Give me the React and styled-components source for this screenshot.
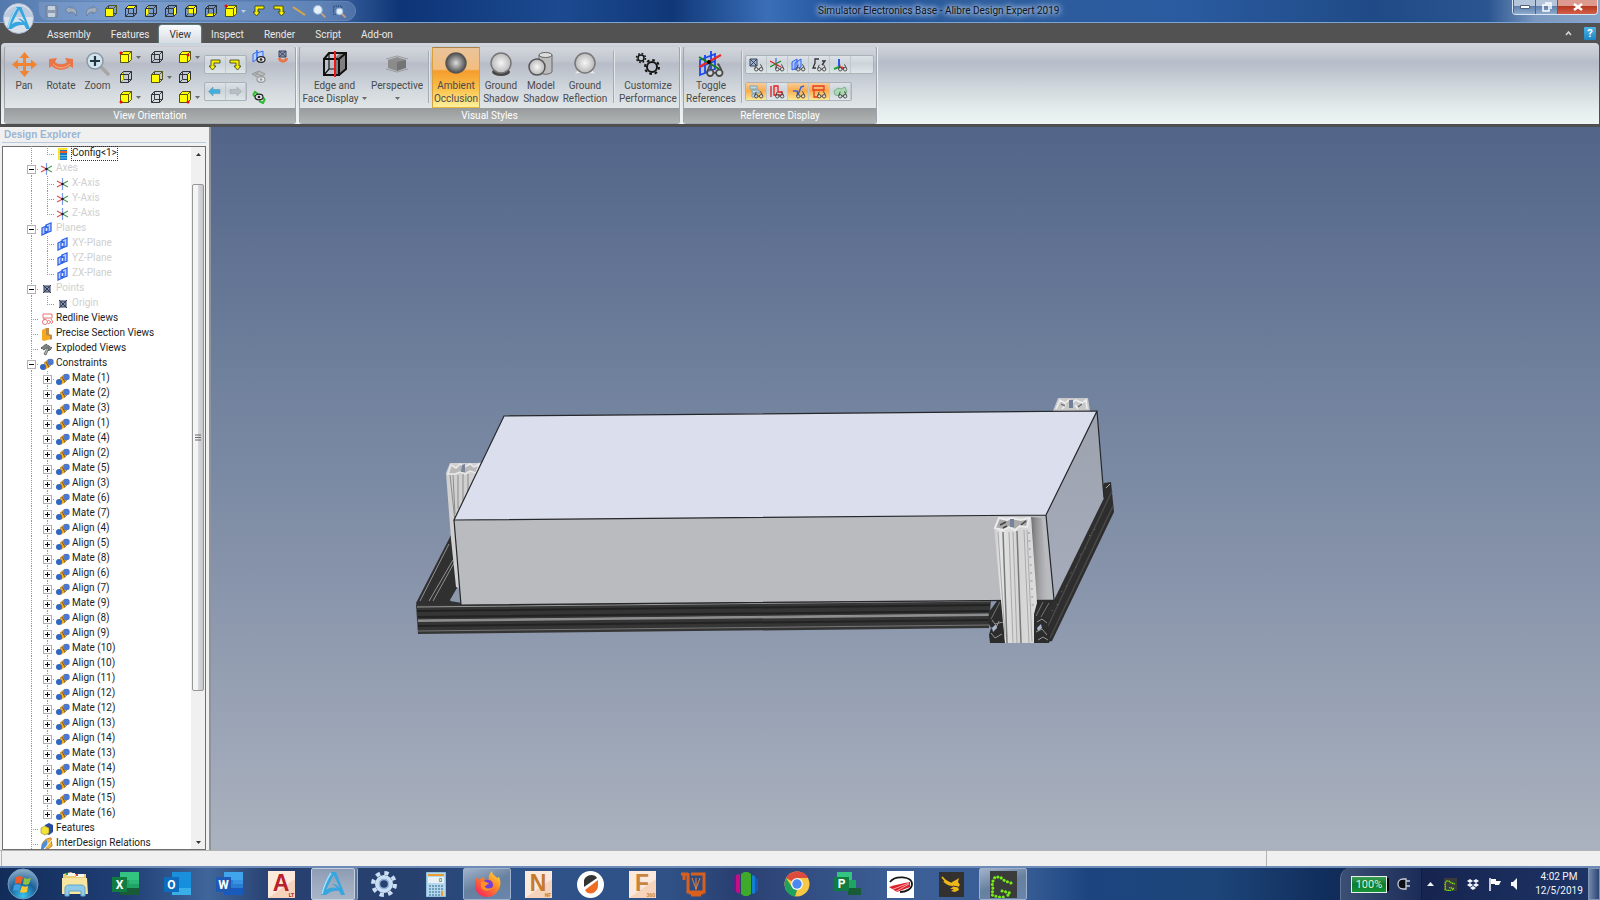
import React from "react";
import styled, { createGlobalStyle, css } from "styled-components";

const GlobalStyle = createGlobalStyle`
  * {
    box-sizing: border-box;
  }
  body {
    margin: 0;
    font-family: Roboto, "Noto Sans", sans-serif;
    font-size: 10px;
    color: #4a4a4a;
  }
  button {
    font: inherit;
    color: inherit;
    border: 0;
    padding: 0;
    background: none;
  }
  svg {
    display: block;
    flex: none;
  }
`;

const Window = styled.div`
  display: flex;
  flex-direction: column;
  height: 100vh;
  overflow: hidden;
  background: #4f4f4f;
`;

/* title bar */

const TitleBar = styled.header`
  display: flex;
  align-items: center;
  height: 23px;
  flex: none;
  border-bottom: 1px solid #7fa3d2;
  background: linear-gradient(
    90deg,
    #5479ae 0,
    #7198cb 8%,
    #466ca6 20%,
    #0d3577 25%,
    #1c4a90 35%,
    #103878 42%,
    #3a6fb8 48%,
    #1d4f98 53%,
    #2f5d9c 60%,
    #2a5ba0 74%,
    #1f4a86 86%,
    #2b5591 93%,
    #7b98bf 96%,
    #88a5c8 100%
  );
`;

const QuickBar = styled.div`
  display: flex;
  align-items: center;
  gap: 6px;
  height: 20px;
  width: 318px;
  margin-left: 38px;
  padding-left: 5px;
  border: 1px solid #6484b3;
  border-radius: 0 10px 10px 10px;
  background: rgba(150, 178, 218, 0.32);
`;

const QuickButton = styled.button`
  display: flex;
  align-items: center;
  justify-content: center;
  gap: 3px;
  min-width: 14px;
  height: 16px;
`;

const Title = styled.h1`
  flex: 1;
  margin: 0;
  padding-left: 462px;
  font-size: 10px;
  line-height: 22px;
  font-weight: 400;
  color: #0d1520;
  text-shadow: 0 0 4px #c3d4ee, 0 0 6px #c3d4ee, 0 0 8px #a9c2e6;
  white-space: nowrap;
`;

const WindowButtons = styled.div`
  display: flex;
  align-self: flex-start;
  height: 15px;
  margin-right: 2px;
  border: 1px solid #dbe6f5;
  border-top: 0;
  border-radius: 0 0 4px 4px;
  overflow: hidden;
`;

const WindowButton = styled.button`
  display: flex;
  align-items: center;
  justify-content: center;
  width: ${(p) => (p.$close ? 40 : 22)}px;
  border-left: 1px solid #48648c;
  background: ${(p) =>
    p.$close
      ? "linear-gradient(#dc9a8e 0 40%, #b53720 45%, #d4614a)"
      : "linear-gradient(#b3c4db 0 40%, #5e80ac 45%, #8fabcd)"};
`;

/* ribbon */

const TabRow = styled.nav`
  position: relative;
  display: flex;
  align-items: flex-end;
  height: 20px;
  flex: none;
  padding: 0 4px 0 37px;
  background: #525252;
`;

const AppButton = styled.button`
  position: absolute;
  left: 3px;
  top: -20px;
`;

const Tab = styled.button`
  height: 18px;
  padding: 0 10px;
  line-height: 20px;
  border-radius: 3px 3px 0 0;
  font-size: 10px;
  color: #e8e8e8;
  ${(p) =>
    p.$active &&
    css`
      color: #333;
      background: linear-gradient(#fafcfc, #d7dce4);
      box-shadow: 0 0 2px #8fdcea;
    `}
`;

const TabEnd = styled.div`
  display: flex;
  align-items: center;
  gap: 12px;
  height: 20px;
  margin-left: auto;
`;

const Help = styled.button`
  width: 12px;
  height: 13px;
  border-radius: 1px;
  font-size: 11px;
  line-height: 13px;
  font-weight: 700;
  color: #fff;
  background: linear-gradient(#4bb4e4, #1c86c6);
`;

const Ribbon = styled.div`
  display: flex;
  align-items: flex-start;
  gap: 3px;
  height: 81px;
  flex: none;
  margin: 0 1px;
  padding: 3px 3px 0;
  border-radius: 4px 4px 0 0;
  background: linear-gradient(#d3d6dd 0, #c3c8d2 14%, #b6bcc9 24%, #ccd2d8 50%, #e4ecec 82%, #eef5f4 100%);
`;

const Panel = styled.section`
  display: flex;
  flex-direction: column;
  height: 78px;
  border: 1px solid #9fa5ab;
  border-top-color: #c9ccd2;
  border-radius: 3px;
  overflow: hidden;
  box-shadow: 1px 0 0 #eef2f3;
  background: linear-gradient(#d3d7dc 0, #c1c6cf 18%, #b7bcc8 22%, #cdd3d9 50%, #e1e7e7 80%);
`;

const PanelBody = styled.div`
  display: flex;
  flex: 1;
`;

const PanelTitle = styled.h2`
  margin: 0;
  height: 15px;
  line-height: 15px;
  font-size: 10px;
  font-weight: 400;
  text-align: center;
  color: #fff;
  background: linear-gradient(#989b9b, #b1b4b4);
`;

const Tool = styled.button`
  display: flex;
  flex-direction: column;
  align-items: center;
  width: ${(p) => p.$w}px;
  height: 61px;
  padding-top: 4px;
  font-size: 10px;
  line-height: 13px;
  white-space: nowrap;
  border: 1px solid transparent;
  ${(p) =>
    p.$active &&
    css`
      border-color: #a8814c #d6a13c #e6b443;
      background: linear-gradient(#eac49c 0, #f3bd7e 36%, #f59c2c 39%, #fbc24c 70%, #fdf19b 100%);
    `}
`;

const ToolIcon = styled.span`
  display: flex;
  align-items: center;
  justify-content: center;
  height: 24px;
  margin-bottom: 3px;
`;

const CaretSpot = styled.span`
  padding-top: 5px;
`;

const Divider = styled.span`
  width: 1px;
  height: 52px;
  margin: 4px 3px;
  background: #a5abb3;
  box-shadow: 1px 0 0 #e2e6e9;
`;

const CubeGrid = styled.div`
  display: grid;
  grid-template-columns: 31px 28px 26px;
  grid-template-rows: repeat(3, 20px);
  margin-left: 3px;
`;

const CubeButton = styled.button`
  display: flex;
  align-items: center;
  gap: 3px;
`;

const Stack = styled.div`
  display: flex;
  flex-direction: column;
  gap: 8px;
  padding: 8px 0 0;
`;

const Group = styled.div`
  display: flex;
  align-self: flex-start;
  height: 19px;
  width: ${(p) => p.$w}px;
  margin-right: ${(p) => p.$gap || 0}px;
  border: 1px solid #abb2ba;
  border-radius: 2px;
  background: linear-gradient(#dce2e6, #cdd4da 45%, #dfe6e8);
`;

const GroupButton = styled.button`
  display: flex;
  align-items: center;
  justify-content: center;
  width: 21px;
  border-right: 1px solid #c0c7cd;
  ${(p) =>
    p.$active &&
    css`
      background: linear-gradient(#f6cd9a, #f9ab4e 45%, #fde793);
    `}
`;

const EyeGrid = styled.div`
  display: grid;
  grid-template-columns: 24px 24px;
  grid-template-rows: repeat(3, 20px);
  place-items: center;
`;

/* middle part */

const Main = styled.main`
  display: flex;
  flex: 1;
  min-height: 0;
  margin-top: 3px;
  background: #f0f0f0;
`;

const Sidebar = styled.aside`
  display: flex;
  flex-direction: column;
  width: 211px;
  flex: none;
  padding: 0 3px 0 2px;
  border-right: 2px solid #8e939c;
`;

const SidebarTitle = styled.h2`
  height: 16px;
  margin: 0 0 3px;
  padding-left: 2px;
  border-bottom: 1px solid #b8cbe0;
  font-family: "Liberation Sans", Arial, sans-serif;
  font-size: 10px;
  line-height: 16px;
  color: #9bb5d3;
`;

const TreeBox = styled.div`
  display: flex;
  flex: 1;
  min-height: 0;
  border: 1px solid #6d6f73;
  background: #fff;
`;

const Tree = styled.ul`
  flex: 1;
  margin: -1px 0 0;
  padding: 0 0 0 20px;
  list-style: none;
  overflow: hidden;
  font-size: 10px;
  color: #1c1c1c;
`;

const TreeRow = styled.li`
  display: flex;
  align-items: center;
  height: 15px;
`;

const Label = styled.span`
  height: 15px;
  line-height: 14px;
  padding: 0 1px;
  white-space: nowrap;
  color: ${(p) => (p.$dim ? "#cfcfcf" : "inherit")};
  outline: ${(p) => (p.$focus ? "1px dotted #333" : "none")};
  outline-offset: -1px;
`;

const dots = (dir) => `repeating-linear-gradient(${dir}, #999 0 1px, transparent 1px 2px)`;

const Guide = styled.span`
  display: flex;
  align-items: center;
  justify-content: center;
  width: 16px;
  height: 15px;
  background-repeat: no-repeat;
  background-image: ${(p) => (p.$branch ? `${dots("180deg")}, ${dots("90deg")}` : dots("180deg"))};
  background-size: 1px ${(p) => (p.$last ? "8px" : "15px")}, 8px 1px;
  background-position: 8px 0, 8px 8px;
`;

const Toggle = styled.button`
  width: 9px;
  height: 9px;
  margin: 2px 0 0 1px;
  border: 1px solid #b0b0b0;
  background: linear-gradient(#111, #111) 1px 3px / 5px 1px no-repeat,
    ${(p) => (p.$open ? "" : "linear-gradient(#111, #111) 3px 1px / 1px 5px no-repeat,")}
    linear-gradient(#fff, #fff);
`;

const ScrollBar = styled.div`
  display: flex;
  flex-direction: column;
  align-items: center;
  width: 14px;
  background: #f0f0f0;
`;

const ScrollArrow = styled.button`
  display: flex;
  align-items: center;
  justify-content: center;
  width: 14px;
  height: 14px;
`;

const Thumb = styled.div`
  display: flex;
  align-items: center;
  justify-content: center;
  width: 12px;
  height: 507px;
  margin: 23px 0 auto;
  border: 1px solid #979797;
  border-radius: 2px;
  background: linear-gradient(90deg, #f5f5f5 0 45%, #d9dadc 50%, #c4c5c9);
`;

const Viewport = styled.div`
  flex: 1;
  min-width: 0;
  background: linear-gradient(#526488 0, #71829e 36%, #8592a9 60%, #abb2bf 100%);

  svg {
    width: 100%;
    height: 100%;
  }
`;

const StatusBar = styled.footer`
  display: flex;
  height: 16px;
  flex: none;
  padding-left: 1px;
  border-top: 1px solid #b4b4b4;
  background: #f0f0f0;
`;

const StatusCell = styled.div`
  flex: ${(p) => p.$grow};
  border-left: 1px solid #b4b4b4;
`;

/* taskbar */

const TaskBar = styled.footer`
  display: flex;
  height: 34px;
  flex: none;
  border-top: 2px solid #6d8bb6;
  background: linear-gradient(
    90deg,
    #122c5a 0,
    #203f75 8%,
    #3f669b 13%,
    #27406f 17%,
    #27416f 26%,
    #2e538a 32%,
    #2f5186 42%,
    #2a3f71 46%,
    #3c5f96 56%,
    #385d95 64%,
    #1c4580 68%,
    #1d4579 76%,
    #102d5b 83%,
    #16244f 89%,
    #1d3567 100%
  );
`;

const StartButton = styled.button`
  display: flex;
  align-items: center;
  justify-content: center;
  width: 45px;
`;

const TaskList = styled.div`
  display: grid;
  grid-template-columns: repeat(19, 1fr);
  justify-items: center;
  width: 980px;
  margin-left: 4px;
`;

const Task = styled.button`
  display: flex;
  align-items: center;
  justify-content: center;
  width: 48px;
  height: 32px;
  border-radius: 2px;
  ${(p) =>
    p.$active &&
    css`
      border: 1px solid #9db1cc;
      background: linear-gradient(160deg, #a2b2ca 0, #66809f 50%, #6a86ad 100%);
    `}
  ${(p) =>
    p.$front &&
    css`
      width: 44px;
      border-color: #c5d0de;
      background: linear-gradient(#8e9bb5, #9dabbf 50%, #a9b4c6);
      box-shadow: 2px 0 0 #5f7698, 3px 0 0 #a2b0c4;
    `}
`;

const Tray = styled.div`
  display: flex;
  align-items: center;
  margin-left: auto;
`;

const PowerBox = styled.div`
  display: flex;
  align-items: center;
  gap: 10px;
  align-self: stretch;
  width: 82px;
  padding-left: 10px;
  border-left: 1px solid #5e7293;
  border-top-left-radius: 10px;
  border-right: 1px solid #101d45;
  background: linear-gradient(90deg, #3b4f74, #1b2c58);
`;

const Battery = styled.span`
  width: 36px;
  height: 17px;
  border: 1px solid #e5efe7;
  font-size: 11px;
  line-height: 15px;
  text-align: center;
  color: #d9f2dc;
  background: linear-gradient(#3a9d54, #0f7a2c 50%, #169539);
  box-shadow: 4px 0 0 -2px #000;
`;

const TrayIcons = styled.div`
  display: flex;
  align-items: center;
  gap: 10px;
  width: 112px;
  padding-left: 5px;
`;

const Clock = styled.time`
  width: 50px;
  margin-right: 4px;
  font-size: 10px;
  line-height: 14px;
  text-align: center;
  color: #f2f5fa;
  white-space: nowrap;
`;

const ShowDesktop = styled.button`
  align-self: stretch;
  width: 12px;
  border: 1px solid #8194b4;
  background: linear-gradient(90deg, #7288ae, #2b4474);
`;

/* small drawings */

const Caret = ({ color = "#6b6b6b" }) => (
  <svg width="5" height="3" viewBox="0 0 5 3">
    <path d="M0 0h5L2.500 3z" fill={color} />
  </svg>
);

const CUBE_FACES = {
  front: "M1.500 4.500h8v8h-8z",
  back: "M4.500 1.500h8v8h-8z",
  top: "M1.500 4.500l3-3h8l-3 3z",
  bottom: "M1.500 12.500l3-3h8l-3 3z",
  left: "M1.500 4.500l3-3v8l-3 3z",
  right: "M9.500 4.500l3-3v8l-3 3z",
};

const Cube = ({ face, dot }) => (
  <svg width="14" height="14" viewBox="0 0 14 14" fill="none">
    <path d="M4.500 1.500v8h8M1.500 12.500l3-3" stroke="#3c4048" strokeWidth="1" />
    {face === "solid" ? (
      <path d="M1.500 4.500l3-3h8v8l-3 3h-8z" fill="#ff0" />
    ) : (
      face && <path d={CUBE_FACES[face]} fill="#ff0" />
    )}
    <path
      d="M1.500 4.500h8v8h-8zM1.500 4.500l3-3h8l-3 3M12.500 1.500v8l-3 3"
      stroke={face === "front" || face === "solid" ? "#55551a" : "#2e323a"}
      strokeWidth="1"
    />
    {dot && <circle cx={dot[0]} cy={dot[1]} r="1.500" fill="#f00" />}
  </svg>
);

const Turn = ({ flip }) => (
  <svg width="12" height="12" viewBox="0 0 12 12">
    <path
      d={flip ? "M1 1h9v6h2L8.500 11 5 7h2V4H1z" : "M11 1H2v6H0l3.500 4L7 7H5V4h6z"}
      fill="#f4ee00"
      stroke="#3a3a12"
      strokeWidth=".8"
    />
  </svg>
);

const Arrow = ({ right }) => (
  <svg width="13" height="11" viewBox="0 0 13 11">
    <path
      d={right ? "M12.500 5.500L8 1v2.500H1v4h7V10z" : "M.5 5.500L5 1v2.500h7v4H5V10z"}
      fill={right ? "#b9bec3" : "#3fb0dd"}
      stroke={right ? "#a4a9ae" : "#6f98b0"}
      strokeWidth=".6"
    />
  </svg>
);

const Lens = ({ size, plus, box }) => (
  <svg width={size} height={size} viewBox="0 0 24 24">
    {box && <path d="M1 2h15v15H1z" fill="none" stroke="#24446f" strokeWidth="2" strokeDasharray="2 2" />}
    <path d="M15 15l7 7" stroke={plus ? "#a9a6a6" : "#c9a078"} strokeWidth="3.500" strokeLinecap="round" />
    <circle
      cx={box ? 12 : 9}
      cy={box ? 12 : 9}
      r={box ? 6 : 8}
      fill={plus ? "#cfe4ee" : "#e4f1fb"}
      stroke={plus ? "#8b979f" : "#9db6cf"}
      strokeWidth={plus ? 1.5 : 2}
    />
    {plus && <path d="M9 4v10M4 9h10" stroke="#253540" strokeWidth="2.200" />}
  </svg>
);

const Pan = () => (
  <svg width="25" height="25" viewBox="0 0 25 25">
    <path
      d="M12.500 0l5 6H14v5h5V7.500l6 5-6 5V14h-5v5h3.500l-5 6-5-6H11v-5H6v3.500l-6-5 6-5V11h5V6H7.500z"
      fill="#f08433"
    />
  </svg>
);

const Rotate = () => (
  <svg width="24" height="24" viewBox="0 0 24 24">
    <path d="M0 7l8-1-2 4c3 3 9 3 12 0l-2-4 8 1v9l-3-2c-4 5-14 5-18 0l-3 2z" fill="#ea7547" />
    <path d="M4 12c4 5 12 5 17 0" fill="none" stroke="#f6b08e" strokeWidth="1" />
  </svg>
);

const EdgeCube = () => (
  <svg width="26" height="26" viewBox="0 0 26 26">
    <path d="M13 7l5-5h6v16l-7 6h-4z" fill="#808080" />
    <path d="M7 2v16h6M2 24l5-6" fill="none" stroke="#111" strokeWidth="1.200" />
    <path d="M2 8h15v16H2zM2 8l5-6h17v16l-7 6M17 8l7-6" fill="none" stroke="#111" strokeWidth="2" />
    <path d="M13 0v26" stroke="#f01616" strokeWidth="2" />
  </svg>
);

const PerspectiveIcon = () => (
  <svg width="24" height="20" viewBox="0 0 24 20">
    <path d="M1 5l11-3 11 3M1 15l11 3 11-3" fill="none" stroke="#9c9c9c" strokeWidth="1" />
    <path d="M3 6l9-2v13l-9-3z" fill="#8b8b8b" />
    <path d="M12 4l9 2v8l-9 3z" fill="#747474" />
    <path d="M3 6l9-3 9 3-9 2z" fill="#8f8f8f" />
  </svg>
);

const Ball = ({ kind }) => (
  <svg width="26" height="24" viewBox="0 0 26 24">
    <defs>
      <radialGradient id={`ball-${kind}`}>
        <stop offset="0" stopColor={kind === "ao" ? "#ddd" : "#f6f6f6"} />
        <stop offset="1" stopColor={kind === "ao" ? "#4d4d4d" : "#b9b9b9"} />
      </radialGradient>
    </defs>
    {kind === "ground" && <ellipse cx="13" cy="20" rx="9" ry="4" fill="#474747" />}
    {kind === "mirror" && <path d="M3 22l3-4h14l3 4c-4-2-16-2-20 0z" fill="#eceeee" />}
    {kind === "model" ? (
      <>
        <path d="M11 3v17c3 3 10 3 13 0V3z" fill="#bcbcbc" stroke="#666" />
        <ellipse cx="17.500" cy="3" rx="6.500" ry="2.500" fill="#ddd" stroke="#666" />
        <circle cx="9" cy="15" r="8" fill="url(#ball-model)" stroke="#555" strokeWidth="1.500" />
      </>
    ) : (
      <circle cx="13" cy="11" r="10" fill={`url(#ball-${kind})`} stroke={kind === "ao" ? "#555" : "#777"} strokeWidth="1.500" />
    )}
  </svg>
);

const Gear = ({ x, y, r, color = "#151515", width = 2 }) => (
  <g fill="none" stroke={color}>
    <circle cx={x} cy={y} r={r} strokeWidth={width} />
    <circle cx={x} cy={y} r={r + width} strokeWidth={width} strokeDasharray={`${((r + width) * Math.PI) / 8} ${((r + width) * Math.PI) / 8}`} />
  </g>
);

const Glasses = ({ x = 0, y = 0, s = 1 }) => (
  <g transform={`translate(${x} ${y}) scale(${s})`} fill="rgba(225,225,225,.6)" stroke="#4b4b4b" strokeWidth="1.300">
    <circle cx="3" cy="7" r="2.300" />
    <circle cx="9.500" cy="7" r="2.300" />
    <path d="M5.300 7h2M1 6l2-5M11 5L9 1h-1" fill="none" />
  </g>
);

const ToggleRefs = () => (
  <svg width="28" height="28" viewBox="0 0 28 28">
    <path d="M3 10l15-6v15L3 25zM8 5v18M14 1v19M3 17l15-6" fill="none" stroke="#1948f0" strokeWidth="1.800" />
    <path d="M2 17L24 5" stroke="#ee2525" strokeWidth="2" />
    <path d="M2 7l20 12" stroke="#13801e" strokeWidth="2" />
    <circle cx="12" cy="12" r="2" />
    <Glasses x={9} y={13} s={1.4} />
  </svg>
);

const REF_SHAPES = {
  point: <path d="M1 1h7v7H1zM1 1l7 7M8 1L1 8" fill="#9fb2cc" stroke="#39435d" />,
  axis: (
    <g fill="none" strokeWidth="1.200">
      <path d="M6 0v11" stroke="#3d6cf0" />
      <path d="M0 3l11 6" stroke="#d23" />
      <path d="M0 9l11-6" stroke="#282" />
    </g>
  ),
  plane: <path d="M1 4l5-3v9l-5 2zM4 5l6-4v8l-6 3z" fill="#a9c4ff" stroke="#2f61e8" />,
  sketch: <path d="M7 1H3v4l-2 5h3M10 3h3l-3 4" fill="none" stroke="#333" strokeWidth="1.300" />,
  csys: (
    <g fill="none" strokeWidth="2">
      <path d="M6 9V1" stroke="#2d55e8" />
      <path d="M6 9l-5 2" stroke="#1da53a" />
      <path d="M6 9l5 1" stroke="#e42727" />
    </g>
  ),
  layers: <path d="M1 1h7v3H1zM3 5h7v3H3zM3 9h5v3H3z" fill="#c3d9e2" stroke="#7da3b5" />,
  dims: <path d="M1 1v11M4 1h4v6h4v3H4z" fill="#f3c7c7" stroke="#e02020" strokeWidth="1.300" />,
  surface: <path d="M2 6h4l1 4 3-8 3-1" fill="none" stroke="#3565d8" strokeWidth="1.500" />,
  redline: <path d="M1 1h11v4H1zM2 5v7h4" fill="none" stroke="#e83a1e" strokeWidth="1.300" />,
  mesh: <path d="M1 6l4-3 3 1 4-2 2 5-5 4-7-1z" fill="#a9d8b2" stroke="#7fb28b" />,
};

const RefIcon = ({ kind }) => (
  <svg width="15" height="14" viewBox="0 0 15 14">
    {REF_SHAPES[kind]}
    <Glasses x={5} y={6} s={0.75} />
  </svg>
);

const EyeIcon = ({ kind }) => (
  <svg width="14" height="14" viewBox="0 0 14 14">
    {kind === "plane" && <path d="M1 4l4-2V0v9l-4 3zM5 3l6-2v8l-6 1z" fill="#b8d0ff" stroke="#2f6bf0" />}
    {kind === "grid" && <path d="M0 4l7-3 6 3-6 4zM3 3l7 3M7 1L3 6" fill="#bbb" stroke="#999" />}
    {kind === "refresh" && <path d="M1 5l2-3 3 2M13 9l-2 4-4-2M1 5l3 2M13 9l-3-1" fill="none" stroke="#2bbd31" strokeWidth="2" />}
    <ellipse
      cx={kind === "refresh" ? 7 : 9}
      cy={kind === "refresh" ? 7 : 9.5}
      rx="4"
      ry="2.800"
      fill="#dfe3e6"
      stroke={kind === "grid" ? "#999" : "#222"}
      strokeWidth="1.200"
    />
    <circle cx={kind === "refresh" ? 7 : 9} cy={kind === "refresh" ? 7 : 9.5} r="1.300" fill={kind === "grid" ? "#999" : "#222"} />
  </svg>
);

const AlibreMark = ({ size }) => (
  <svg width={size} height={size} viewBox="0 0 28 28">
    <path d="M12 2h5l9 23h-4c-2-5-5-9-9-11 4 0 6 2 8 4L14.500 5 7 20c5-4 11-3 15 1-6-1-11 0-15 4H2C4 15 8 7 12 2z" fill="#37a6df" />
    <path d="M12 3C8 9 5 16 3 24" fill="none" stroke="#a9dcf5" strokeWidth="1.500" />
  </svg>
);

/* tree icons */

const TreeIcon = ({ kind }) => (
  <svg width="16" height="14" viewBox="0 0 16 14">
    {kind === "config" && (
      <>
        <path d="M3 1h9v12H3z" fill="#fbe52c" />
        <path d="M5 3h7v10H5z" fill="#1878c8" />
        <path d="M5 4h7v2H5z" fill="#f45b22" />
        <path d="M5 8.500h7M5 11h7" stroke="#5fc0e8" />
      </>
    )}
    {kind === "axis" && (
      <g strokeWidth="1.200">
        <path d="M7.500 1v12" stroke="#8199ec" />
        <path d="M2 4l5.500 3L2 10" fill="none" stroke="#e05252" />
        <path d="M13 4L7.500 7l5.500 3" fill="none" stroke="#4fa05a" />
        <circle cx="7.500" cy="7" r="1.300" fill="#222" />
      </g>
    )}
    {kind === "plane" && (
      <g fill="#bcd0ff" stroke="#2f62ea" strokeWidth="1.300">
        <path d="M7 3l5-2v8l-5 2z" />
        <path d="M3 6l4-2v7l-4 2z" />
        <path d="M6 6l3-1v4l-3 1z" fill="#e4ecff" />
      </g>
    )}
    {kind === "point" && <path d="M5 4h6v6H5zM4 3l8 8M12 3l-8 8" fill="#7e92c0" stroke="#33384c" />}
    {kind === "redline" && (
      <g fill="none" stroke="#e87474">
        <path d="M4 2h9v4H4z" />
        <circle cx="6" cy="10" r="2.500" />
        <path d="M9 8l3 2-3 2M5 6v2M12 7l2 3-2 2" />
      </g>
    )}
    {kind === "section" && (
      <>
        <path d="M3 3l4-2v7l5 0v4l-7 2-2-1z" fill="#f6a81f" />
        <path d="M7 1l3 0v6l3 1v4l-2 1V9L7 8z" fill="#bb8a4a" />
      </>
    )}
    {kind === "exploded" && (
      <>
        <path d="M2 6l5-4 6 4-3 3-3-3-2 2z" fill="#7d8484" stroke="#4a5050" strokeDasharray="2 1" />
        <path d="M10 6l-3 7-2-1 3-6z" fill="#b5bbbb" stroke="#555c5c" strokeWidth=".8" />
      </>
    )}
    {kind === "constraint" && (
      <>
        <path d="M5 6l5-4 4 4-5 5z" fill="#f2a61f" stroke="#9a6b1e" strokeWidth=".6" />
        <circle cx="11.500" cy="5" r="3.200" fill="#4c78cf" />
        <path d="M3 8l4-2 3 4-4 3z" fill="#f2a61f" />
        <circle cx="4" cy="10" r="3" fill="#2f68c4" />
        <path d="M7 5l3 5" stroke="#7a5a2a" />
      </>
    )}
    {kind === "features" && (
      <>
        <path d="M6 3l4-2 4 2v7l-4 3-4-2z" fill="#2b4ba0" />
        <path d="M2 6l4-2 4 2v5l-4 2-4-2z" fill="#f2e436" stroke="#8c841c" strokeWidth=".6" />
      </>
    )}
    {kind === "inter" && (
      <>
        <path d="M3 9c0-4 4-8 9-8l1 8-4 3z" fill="#f0b83a" stroke="#c97e2a" />
        <path d="M2 12c0-5 3-8 6-9v6l-3 4z" fill="#4c8fd6" />
        <path d="M5 12l8-9" stroke="#fff" />
      </>
    )}
  </svg>
);

const constraintNames = [
  "Mate (1)", "Mate (2)", "Mate (3)", "Align (1)", "Mate (4)", "Align (2)",
  "Mate (5)", "Align (3)", "Mate (6)", "Mate (7)", "Align (4)", "Align (5)",
  "Mate (8)", "Align (6)", "Align (7)", "Mate (9)", "Align (8)", "Align (9)",
  "Mate (10)", "Align (10)", "Align (11)", "Align (12)", "Mate (12)", "Align (13)",
  "Align (14)", "Mate (13)", "Mate (14)", "Align (15)", "Mate (15)", "Mate (16)",
];

const treeRows = [
  { text: "Config<1>", icon: "config", child: true, last: true, focus: true },
  { text: "Axes", icon: "axis", open: true, dim: true },
  { text: "X-Axis", icon: "axis", child: true, dim: true },
  { text: "Y-Axis", icon: "axis", child: true, dim: true },
  { text: "Z-Axis", icon: "axis", child: true, dim: true, last: true },
  { text: "Planes", icon: "plane", open: true, dim: true },
  { text: "XY-Plane", icon: "plane", child: true, dim: true },
  { text: "YZ-Plane", icon: "plane", child: true, dim: true },
  { text: "ZX-Plane", icon: "plane", child: true, dim: true, last: true },
  { text: "Points", icon: "point", open: true, dim: true },
  { text: "Origin", icon: "point", child: true, dim: true, last: true },
  { text: "Redline Views", icon: "redline" },
  { text: "Precise Section Views", icon: "section" },
  { text: "Exploded Views", icon: "exploded" },
  { text: "Constraints", icon: "constraint", open: true },
  ...constraintNames.map((text, i) => ({
    text,
    icon: "constraint",
    child: true,
    closed: true,
    last: i === constraintNames.length - 1,
  })),
  { text: "Features", icon: "features" },
  { text: "InterDesign Relations", icon: "inter" },
];

const TreeItem = ({ item }) => {
  const toggle = (item.open || item.closed) && (
    <Toggle $open={item.open} aria-label={`Toggle ${item.text}`} />
  );
  return (
    <TreeRow>
      <Guide $branch={!item.child}>{!item.child && toggle}</Guide>
      {item.child && (
        <Guide $branch $last={item.last}>
          {toggle}
        </Guide>
      )}
      <TreeIcon kind={item.icon} />
      <Label $dim={item.dim} $focus={item.focus}>
        {item.text}
      </Label>
    </TreeRow>
  );
};

/* 3D model */

const Model = () => (
  <svg viewBox="211 127 1389 723" preserveAspectRatio="xMidYMid slice">
    <defs>
      <linearGradient id="post" x1="0" x2="1">
        <stop offset="0" stopColor="#c9c9c9" />
        <stop offset=".15" stopColor="#e3e3e3" />
        <stop offset=".6" stopColor="#d4d4d4" />
        <stop offset="1" stopColor="#dedede" />
      </linearGradient>
      <linearGradient id="shade" x1="0" x2="1">
        <stop offset="0" stopColor="#555" stopOpacity=".75" />
        <stop offset="1" stopColor="#999" stopOpacity="0" />
      </linearGradient>
      <linearGradient id="side" x1="0" x2="0" y1="0" y2="1">
        <stop offset="0" stopColor="#9da2ae" />
        <stop offset="1" stopColor="#a6acbb" />
      </linearGradient>
    </defs>

    {/* back rails and posts */}
    <path d="M451 535l-35 68 1 4h45v-4l-12-2 8-14z" fill="#303030" />
    <path d="M450 600h12l-1-14-4 2z" fill="#8d98aa" />
    <path d="M449 544l-29 57M453 560l-24 41M454 563l-21 38" stroke="#a9aab0" strokeWidth=".8" fill="none" />
    <path d="M446 473l4-10h32l-27 57 4 68-3-1-5-48z" fill="#d0d0d0" />
    <path d="M450 475l5 46M453 475l2 39M458 475v34M463 474v27M468 474v17" stroke="#8b8b8b" strokeWidth="1" />
    <path d="M448 474l3-9 5 3 4-4 5 3 5-3 4 3 5-3-3 9-6-2-5 3-5-2-5 2z" fill="#b9b9b9" stroke="#e9e9e9" strokeWidth="1.500" />
    <path d="M462 465l3-1v8h-4z" fill="#77849c" />
    <path d="M1053 411l5-13h30l2 13z" fill="#c9c9c9" />
    <path d="M1056 409l4-9 5 3 4-3 3 3 4-3 6 3 4-3 1 9M1062 409l4-4M1078 409l-3-4" fill="none" stroke="#eee" strokeWidth="1.500" />
    <path d="M1061 404l4 2M1082 404l-4 3" stroke="#666" strokeWidth="1.200" />
    <path d="M1069 400h4v8h-4z" fill="#70809a" />

    {/* right rail */}
    <path d="M1104 483l7-1 3 30-62 129-8 2-20-8 10-34 19-1z" fill="#2e2e2e" />
    <path d="M1112 491L1048 626M1113 506L1050 638" stroke="#484848" strokeWidth="1.500" />
    <path d="M1106 488l4-4" stroke="#aaa" />
    <path d="M1095 529l-40 80M1090 535l-38 76" stroke="#777" strokeDasharray="1 20" />

    {/* front rail */}
    <path d="M416 605l575-6-2 29-571 6z" fill="#353535" />
    <path d="M417 607l573-6M418 620l571-6" stroke="#9a9a9c" strokeWidth="1" />
    <path d="M417 611l573-6M418 617l571-6" stroke="#222" strokeWidth="2" />
    <path d="M418 621l571-6" stroke="#8d8e90" strokeWidth="2" />
    <path d="M418 626l571-6" stroke="#232323" strokeWidth="2" />
    <path d="M418 631l571-6" stroke="#777" strokeWidth="1" />

    {/* box */}
    <path d="M504 416l593-5-51 104-592 5z" fill="#dbdfed" />
    <path d="M454 520l592-5 8 85-593 5z" fill="#babbbf" />
    <path d="M1097 411l7 87-50 102-8-85z" fill="url(#side)" />
    <path d="M504 416l593-5-51 104-592 5zM454 520l7 85 593-5-8-85M1097 411l7 87" fill="none" stroke="#26272a" strokeWidth="1.200" />

    {/* rail ends */}
    <path d="M989 612l8-11h6l2 42h-15l-1-8 2-7-3-6z" fill="#2c2c2c" />
    <path d="M1034 600h19l-10 18 6 2-2 7 3 8-1 8h-15z" fill="#2c2c2c" />
    <path d="M992 620l3 4 8-2M991 628h5l3-7M991 633l4 5 7-4M1037 622l5-3 5 4M1036 632l6-3 5 6M1038 640l5-3 5 3" fill="none" stroke="#949494" strokeWidth="1" />
    <path d="M1000 602l-9 17M1043 602l-7 14M1049 603l-8 14" stroke="#777" strokeWidth="1" />
    <path d="M992 628l4-4 1 4-4 4zM1037 628l4-4 1 4-4 3z" fill="#a9b5cc" />

    {/* front post */}
    <path d="M1031 517l11 1 6 82h-13z" fill="url(#shade)" />
    <path d="M994 527l5-10h32l6 86-3 11v29h-29z" fill="url(#post)" />
    <path d="M1003 532l4 111M1017 531l4 112" stroke="#77797a" strokeWidth="1.500" />
    <path d="M998 532l7 105M1009 532l4 111M1013 532l4 111M1024 530l5 113M1027 530l5 112" stroke="#aaa" strokeWidth="1" />
    <path d="M1029 532l4 78" stroke="#b5b5b5" strokeWidth="2" strokeDasharray="2 6" />
    <path d="M995 528l4-10 8 2 4-2 10 2 8-2-2 9-7-1-5 4-6-3-6 3z" fill="#a9a9a9" stroke="#ececec" strokeWidth="2" />
    <path d="M1000 525l6-3M1026 521l-5 4M1003 528l4-2" stroke="#444" strokeWidth="1.500" />
    <path d="M1010 519h4v8h-4z" fill="#75839d" />
  </svg>
);

/* taskbar drawings */

const OfficeIcon = ({ letter, colors }) => (
  <svg width="28" height="26" viewBox="0 0 28 26">
    <path d="M8 1h19v8H8z" fill={colors[0]} />
    <path d="M8 9h19v8H8z" fill={colors[1]} />
    <path d="M8 17h19v7H8z" fill={colors[2]} />
    <path d="M17 1h10v12H17z" fill={colors[0]} opacity=".6" />
    <path d="M0 6h15v15H0z" fill={colors[3]} />
    <text x="7.500" y="18" fontSize="12" fontWeight="700" fill="#fff" textAnchor="middle">
      {letter}
    </text>
  </svg>
);

const LetterTile = ({ letter, sub, color }) => (
  <svg width="27" height="27" viewBox="0 0 27 27">
    <path d="M0 0h27v27H0z" fill="#fbe9dd" />
    <path d="M0 27L27 8v19z" fill="#f6d3bb" />
    <text x="13" y="20" fontSize="23" fontWeight="700" fill={color} textAnchor="middle" fontFamily="Liberation Sans">
      {letter}
    </text>
    <text x="26" y="26" fontSize="5" fontWeight="700" fill={color} textAnchor="end">
      {sub}
    </text>
  </svg>
);

const GDots = ({ size }) => (
  <svg width={size} height={size} viewBox="0 0 27 27">
    <path d="M0 0h27v27H0z" fill="#3a3b3b" />
    <path
      d="M21 12l-6-2-5-4-5 0-3 6 1 6-1 6 6 2 6 0M12 20l8 2-3 3"
      fill="none"
      stroke="#78ea18"
      strokeWidth="3"
      strokeLinecap="round"
      strokeDasharray=".1 3.600"
    />
  </svg>
);

const Explorer = () => (
  <svg width="28" height="26" viewBox="0 0 28 26">
    <path d="M2 3l8-2 3 2h12v20H2z" fill="#e8cd74" />
    <path d="M6 2h8v3H6zM15 3h8v3h-8z" fill="#f4f7f2" />
    <path d="M5 2h2v2H5z" fill="#29a043" />
    <path d="M15 3h2v2h-2z" fill="#d54531" />
    <path d="M1 7h25l1 16H1z" fill="#f8e5a0" />
    <path d="M4 25v-8c0-2 2-3 4-3h12c2 0 4 1 4 3v8h-4v-5H8v5z" fill="#8fcbe9" stroke="#5ea5cd" />
  </svg>
);

const GearTask = () => (
  <svg width="26" height="26" viewBox="0 0 26 26">
    <Gear x={13} y={13} r={7} color="#c9ddf3" width={4} />
    <circle cx="13" cy="13" r="4.500" fill="none" stroke="#8fb4e2" strokeWidth="1.500" />
  </svg>
);

const Calculator = () => (
  <svg width="20" height="25" viewBox="0 0 20 25">
    <path d="M0 0h20v25H0z" fill="#b7d9ee" stroke="#6fa5c8" />
    <path d="M2 2h16v2H2z" fill="#ee9c2e" />
    <path d="M2 5h16v6H2z" fill="#e8f1f5" />
    <path d="M3 14h14M3 17h14M3 20h14M3 23h11" stroke="#6f9dbd" strokeWidth="2" strokeDasharray="2 1" />
    <path d="M16 19v5" stroke="#ee9c2e" strokeWidth="2" />
    <text x="16" y="10" fontSize="6" fill="#345" textAnchor="end">0</text>
  </svg>
);

const Firefox = () => (
  <svg width="27" height="27" viewBox="0 0 27 27">
    <defs>
      <linearGradient id="fox" x1="1" y1="0" x2=".2" y2="1">
        <stop offset="0" stopColor="#ffe94a" />
        <stop offset=".45" stopColor="#ff8b24" />
        <stop offset="1" stopColor="#f5245d" />
      </linearGradient>
    </defs>
    <path d="M3 6l2 3 4-3 2 3 4-1c-1-3 1-6 3-8 0 4 3 4 5 7l2-1c2 4 2 8 0 12-3 6-8 8-12 8C6 26 1 21 1 15c0-4 0-6 2-9z" fill="url(#fox)" />
    <circle cx="13.500" cy="14" r="5.500" fill="#7440d8" />
    <path d="M7 11c4-2 5 1 8 1-1 2-4 2-4 4 2 2 5 2 8 0-2 5-10 5-12 0z" fill="#ff9227" />
  </svg>
);

const Slicer = () => (
  <svg width="27" height="27" viewBox="0 0 27 27">
    <circle cx="13.500" cy="13.500" r="13.500" fill="#fff" />
    <path d="M7 16V9c2-5 10-7 13-2z" fill="#343434" />
    <path d="M21 9v6c-1 8-10 10-13 4z" fill="#ef6c25" />
  </svg>
);

const Laser = () => (
  <svg width="26" height="26" viewBox="0 0 26 26">
    <path d="M0 3h7M3 3v6M7 2v19h16V3H10M8 22h14M10 24h10" fill="none" stroke="#d9601c" strokeWidth="3" />
    <path d="M15 7v12M11 7l4 11M19 7l-4 11" fill="none" stroke="#e8813d" strokeWidth="1" />
  </svg>
);

const Capsules = () => (
  <svg width="25" height="26" viewBox="0 0 25 26">
    <path d="M0 7l3-3v17l-3-2z" fill="#5b1f8e" />
    <path d="M3 4l4-1v20l-4-2z" fill="#c40f82" />
    <path d="M8 3l3-2h4l3 2v20l-3 2h-4l-3-2z" fill="#3ea92b" />
    <path d="M19 4l3 1v17l-3 1z" fill="#137fd1" />
    <path d="M22 6l3 2v12l-3 2z" fill="#1e53b8" />
  </svg>
);

const Chrome = () => (
  <svg width="26" height="26" viewBox="0 0 26 26">
    <circle cx="13" cy="13" r="12.500" fill="#f6c844" />
    <path d="M13 13L2 7C6-1 20-2 24 7H13z" fill="#dd4b3e" />
    <path d="M2 7l6 9 5 3-2 6.500C1 24-1 14 2 7z" fill="#1fa15d" />
    <circle cx="13" cy="13" r="6" fill="#f4f6f4" />
    <circle cx="13" cy="13" r="4.700" fill="#4a89f3" />
  </svg>
);

const Project = () => (
  <svg width="28" height="26" viewBox="0 0 28 26">
    <path d="M3 1h15v8H3z" fill="#33c481" />
    <path d="M12 9h10v8H12z" fill="#21a366" />
    <path d="M14 17h13v7H14z" fill="#185c37" />
    <path d="M0 6h15v14H0z" fill="#107c41" />
    <text x="7.500" y="17" fontSize="12" fontWeight="700" fill="#fff" textAnchor="middle">P</text>
  </svg>
);

const Ellipse = () => (
  <svg width="27" height="27" viewBox="0 0 27 27">
    <path d="M0 0h27v27H0z" fill="#fff" />
    <path d="M3 11c5-7 22-6 22 2 0 5-6 8-12 8" fill="none" stroke="#181818" strokeWidth="1.800" />
    <path d="M2 16c6-2 14-4 21-5v5L10 21z" fill="#dc1f2a" />
    <path d="M4 19l18-7M8 21l14-8" stroke="#fff" strokeWidth=".6" />
  </svg>
);

const Wasp = () => (
  <svg width="25" height="25" viewBox="0 0 25 25">
    <path d="M0 0h25v25H0z" fill="#333130" />
    <path d="M3 5c3 4 6 6 11 7M5 9c3 3 6 4 9 4" fill="none" stroke="#ecb91a" strokeWidth="1.800" />
    <path d="M13 10l4-2 3-2-1 4 2 3-2 2 1 3-4 2-4-1 3-2h-4l3-2z" fill="#ecb91a" />
    <path d="M14 14l5 1" stroke="#333130" />
  </svg>
);

const StartOrb = () => (
  <svg width="32" height="32" viewBox="0 0 32 32">
    <defs>
      <radialGradient id="orb" cx=".5" cy=".9" r=".9">
        <stop offset="0" stopColor="#3bc3ee" />
        <stop offset=".5" stopColor="#1b6299" />
        <stop offset="1" stopColor="#8fb0c8" />
      </radialGradient>
    </defs>
    <circle cx="16" cy="16" r="15" fill="url(#orb)" stroke="#6f9cc0" />
    <path d="M9 9c3-1 4-1 7 0l-2 7c-2-1-4-1-6 0z" fill="#ee5a28" />
    <path d="M17 10c2 1 5 1 7 0l-2 6c-2 1-4 1-6 0z" fill="#8ac441" />
    <path d="M7 17c2-1 5-1 7 0l-2 6c-2-1-4-1-6 0z" fill="#3e9fe0" />
    <path d="M15 18c2 1 4 1 6 0l-1 6c-3 1-5 1-7 0z" fill="#fbc82c" />
  </svg>
);

const GREEN = ["#33c481", "#21a366", "#185c37", "#107c41"];
const BLUE = ["#41a5ee", "#2b7cd3", "#185abd", "#1e5ab5"];
const SKY = ["#1a8fdc", "#1490df", "#3aaee8", "#0f6cbd"];

const tasks = [
  { name: "Explorer", icon: <Explorer /> },
  { name: "Excel", icon: <OfficeIcon letter="X" colors={GREEN} /> },
  { name: "Outlook", icon: <OfficeIcon letter="O" colors={SKY} /> },
  { name: "Word", icon: <OfficeIcon letter="W" colors={BLUE} /> },
  { name: "AutoCAD LT", icon: <LetterTile letter="A" sub="LT" color="#b8202a" /> },
  { name: "Alibre Design", icon: <AlibreMark size={28} />, active: true, front: true },
  { name: "Settings", icon: <GearTask /> },
  { name: "Calculator", icon: <Calculator /> },
  { name: "Firefox", icon: <Firefox />, active: true },
  { name: "Inventor", icon: <LetterTile letter="N" sub="NF" color="#c57a2c" /> },
  { name: "Slicer", icon: <Slicer /> },
  { name: "Fusion 360", icon: <LetterTile letter="F" sub="360" color="#c98440" /> },
  { name: "Laser", icon: <Laser /> },
  { name: "Capsules", icon: <Capsules /> },
  { name: "Chrome", icon: <Chrome /> },
  { name: "Project", icon: <Project /> },
  { name: "Viewer", icon: <Ellipse /> },
  { name: "Wasp", icon: <Wasp /> },
  { name: "Grid", icon: <GDots size={27} />, active: true },
];

const tabs = ["Assembly", "Features", "View", "Inspect", "Render", "Script", "Add-on"];

const quickCubes = [
  { name: "Front view", face: "front" },
  { name: "Top view", face: "top" },
  { name: "Left view", face: "left" },
  { name: "Right view", face: "right" },
  { name: "Back view", face: "back" },
  { name: "Bottom view", face: "bottom" },
  { name: "Isometric view", face: "solid", dot: [2, 2], menu: true },
];

const ribbonCubes = [
  { face: "solid", dot: [2, 3], menu: true },
  { face: "" },
  { face: "solid", dot: [10, 5], menu: true },
  { face: "left" },
  { face: "front", menu: true },
  { face: "right" },
  { face: "solid", dot: [2, 12], menu: true },
  { face: "" },
  { face: "solid", dot: [10, 12], menu: true },
];

const App = () => (
  <Window>
    <GlobalStyle />
    <TitleBar>
      <QuickBar>
        <QuickButton aria-label="Save">
          <svg width="13" height="13" viewBox="0 0 13 13">
            <path d="M1 1h11v11H1z" fill="#8c9bb0" stroke="#6c7c94" />
            <path d="M3 1h7v4H3zM3 8h7v4H3z" fill="#c5d0de" />
          </svg>
        </QuickButton>
        <QuickButton aria-label="Undo">
          <svg width="13" height="12" viewBox="0 0 13 12">
            <path d="M0 5l5-4v2c5-1 8 3 6 8-1-3-3-4-6-4v2z" fill="#a3aebd" stroke="#66789a" strokeWidth=".8" />
          </svg>
        </QuickButton>
        <QuickButton aria-label="Redo">
          <svg width="13" height="12" viewBox="0 0 13 12">
            <path d="M13 5L8 1v2C3 2 0 6 2 11c1-3 3-4 6-4v2z" fill="#a3aebd" stroke="#66789a" strokeWidth=".8" />
          </svg>
        </QuickButton>
        {quickCubes.map((c) => (
          <QuickButton key={c.name} aria-label={c.name}>
            <Cube face={c.face} dot={c.dot} />
            {c.menu && <Caret color="#c3cfdf" />}
          </QuickButton>
        ))}
        <QuickButton aria-label="Rotate left">
          <Turn />
        </QuickButton>
        <QuickButton aria-label="Rotate right">
          <Turn flip />
        </QuickButton>
        <QuickButton aria-label="Measure">
          <svg width="14" height="12" viewBox="0 0 14 12">
            <path d="M1 2l12 8" stroke="#d9a741" strokeWidth="2" />
          </svg>
        </QuickButton>
        <QuickButton aria-label="Zoom to fit">
          <Lens size={13} />
        </QuickButton>
        <QuickButton aria-label="Zoom to window">
          <Lens size={13} box />
        </QuickButton>
      </QuickBar>
      <Title>Simulator Electronics Base - Alibre Design Expert 2019</Title>
      <WindowButtons>
        <WindowButton aria-label="Minimize">
          <svg width="10" height="4" viewBox="0 0 10 4">
            <path d="M.5 .5h9v3h-9z" fill="#fff" stroke="#53617a" />
          </svg>
        </WindowButton>
        <WindowButton aria-label="Restore">
          <svg width="10" height="10" viewBox="0 0 10 10">
            <path d="M3 1h6v6M1 3h6v6H1z" fill="none" stroke="#fff" strokeWidth="1.500" />
          </svg>
        </WindowButton>
        <WindowButton $close aria-label="Close">
          <svg width="10" height="8" viewBox="0 0 10 8">
            <path d="M1 1l8 6M9 1L1 7" stroke="#fff" strokeWidth="2.500" />
          </svg>
        </WindowButton>
      </WindowButtons>
    </TitleBar>

    <TabRow>
      <AppButton aria-label="Application menu">
        <svg width="31" height="31" viewBox="0 0 31 31">
          <circle cx="15.500" cy="15.500" r="15" fill="#d9e1ea" stroke="#a7b5c8" />
          <path d="M1 14a15 15 0 0 1 29 0z" fill="#bccbe0" />
          <g transform="translate(2 2)">
            <AlibreMark size={27} />
          </g>
        </svg>
      </AppButton>
      {tabs.map((t) => (
        <Tab key={t} $active={t === "View"}>
          {t}
        </Tab>
      ))}
      <TabEnd>
        <svg width="7" height="5" viewBox="0 0 7 5">
          <path d="M1 4l2.500-3L6 4" fill="none" stroke="#d8d8d8" strokeWidth="1.500" />
        </svg>
        <Help>?</Help>
      </TabEnd>
    </TabRow>

    <Ribbon>
      <Panel>
        <PanelBody>
          <Tool $w={38}>
            <ToolIcon><Pan /></ToolIcon>
            Pan
          </Tool>
          <Tool $w={36}>
            <ToolIcon><Rotate /></ToolIcon>
            Rotate
          </Tool>
          <Tool $w={37}>
            <ToolIcon><Lens size={24} plus /></ToolIcon>
            Zoom
          </Tool>
          <CubeGrid>
            {ribbonCubes.map((c, i) => (
              <CubeButton key={i} aria-label={`Orientation ${i + 1}`}>
                <Cube face={c.face} dot={c.dot} />
                {c.menu && <Caret />}
              </CubeButton>
            ))}
          </CubeGrid>
          <Stack>
            <Group $w={43}>
              <GroupButton aria-label="Turn left"><Turn /></GroupButton>
              <GroupButton aria-label="Turn right"><Turn flip /></GroupButton>
            </Group>
            <Group $w={43}>
              <GroupButton aria-label="Previous view"><Arrow /></GroupButton>
              <GroupButton aria-label="Next view"><Arrow right /></GroupButton>
            </Group>
          </Stack>
          <EyeGrid>
            <EyeIcon kind="plane" />
            <svg width="12" height="14" viewBox="0 0 12 14">
              <path d="M2 1h7v6H2zM2 1l7 6M9 1L2 7" fill="#8f9ab0" stroke="#39425c" />
              <path d="M1 8l3 0c0 2 4 2 4 0l3 0c0 6-10 6-10 0z" fill="#e9764a" />
            </svg>
            <EyeIcon kind="grid" />
            <span />
            <EyeIcon kind="refresh" />
          </EyeGrid>
        </PanelBody>
        <PanelTitle>View Orientation</PanelTitle>
      </Panel>

      <Panel>
        <PanelBody>
          <Tool $w={69}>
            <ToolIcon><EdgeCube /></ToolIcon>
            <span>Edge and</span>
            <CubeButton as="span">Face Display <Caret /></CubeButton>
          </Tool>
          <Tool $w={56}>
            <ToolIcon><PerspectiveIcon /></ToolIcon>
            <span>Perspective</span>
            <CaretSpot><Caret /></CaretSpot>
          </Tool>
          <Divider />
          <Tool $w={48} $active>
            <ToolIcon><Ball kind="ao" /></ToolIcon>
            <span>Ambient</span>
            <span>Occlusion</span>
          </Tool>
          <Tool $w={42}>
            <ToolIcon><Ball kind="ground" /></ToolIcon>
            <span>Ground</span>
            <span>Shadow</span>
          </Tool>
          <Tool $w={38}>
            <ToolIcon><Ball kind="model" /></ToolIcon>
            <span>Model</span>
            <span>Shadow</span>
          </Tool>
          <Tool $w={50}>
            <ToolIcon><Ball kind="mirror" /></ToolIcon>
            <span>Ground</span>
            <span>Reflection</span>
          </Tool>
          <Divider />
          <Tool $w={62}>
            <ToolIcon>
              <svg width="26" height="24" viewBox="0 0 26 24">
                <Gear x={6} y={6} r={3} width={1.5} />
                <Gear x={17} y={15} r={5} width={2} />
              </svg>
            </ToolIcon>
            <span>Customize</span>
            <span>Performance</span>
          </Tool>
        </PanelBody>
        <PanelTitle>Visual Styles</PanelTitle>
      </Panel>

      <Panel>
        <PanelBody>
          <Tool $w={54}>
            <ToolIcon><ToggleRefs /></ToolIcon>
            <span>Toggle</span>
            <span>References</span>
          </Tool>
          <Divider />
          <Stack>
            <Group $w={129} $gap={2}>
              {["point", "axis", "plane", "sketch", "csys"].map((k) => (
                <GroupButton key={k} aria-label={`Show ${k}`}><RefIcon kind={k} /></GroupButton>
              ))}
            </Group>
            <Group $w={107}>
              {["layers", "dims", "surface", "redline", "mesh"].map((k) => (
                <GroupButton key={k} aria-label={`Show ${k}`} $active={k !== "dims" && k !== "mesh"}>
                  <RefIcon kind={k} />
                </GroupButton>
              ))}
            </Group>
          </Stack>
        </PanelBody>
        <PanelTitle>Reference Display</PanelTitle>
      </Panel>
    </Ribbon>

    <Main>
      <Sidebar>
        <SidebarTitle>Design Explorer</SidebarTitle>
        <TreeBox>
          <Tree>
            {treeRows.map((item) => (
              <TreeItem key={item.text} item={item} />
            ))}
          </Tree>
          <ScrollBar>
            <ScrollArrow aria-label="Scroll up">
              <svg width="5" height="3" viewBox="0 0 5 3"><path d="M0 3h5L2.500 0z" fill="#333" /></svg>
            </ScrollArrow>
            <Thumb>
              <svg width="6" height="7" viewBox="0 0 6 7"><path d="M0 1h6M0 3.500h6M0 6h6" stroke="#666" /></svg>
            </Thumb>
            <ScrollArrow aria-label="Scroll down">
              <Caret color="#333" />
            </ScrollArrow>
          </ScrollBar>
        </TreeBox>
      </Sidebar>
      <Viewport>
        <Model />
      </Viewport>
    </Main>

    <StatusBar>
      <StatusCell $grow={1266} />
      <StatusCell $grow={333} />
    </StatusBar>

    <TaskBar>
      <StartButton aria-label="Start">
        <StartOrb />
      </StartButton>
      <TaskList>
        {tasks.map((t) => (
          <Task key={t.name} aria-label={t.name} $active={t.active} $front={t.front}>
            {t.icon}
          </Task>
        ))}
      </TaskList>
      <Tray>
        <PowerBox>
          <Battery>100%</Battery>
          <svg width="15" height="12" viewBox="0 0 15 12">
            <path d="M1 6c0-3 2-5 5-5h3v10H6C3 11 1 9 1 6zM9 3h4M9 8h4" fill="#0c0f14" stroke="#c8ced8" strokeWidth="1.300" />
          </svg>
        </PowerBox>
        <TrayIcons>
          <svg width="7" height="4" viewBox="0 0 7 4"><path d="M0 4h7L3.500 0z" fill="#eef2f8" /></svg>
          <GDots size={13} />
          <svg width="12" height="11" viewBox="0 0 12 11">
            <path d="M3 0l3 2-3 2-3-2zM9 0l3 2-3 2-3-2zM3 4l3 2-3 2-3-2zM9 4l3 2-3 2-3-2zM6 7l3 2-3 2-3-2z" fill="#f4f7fb" />
          </svg>
          <svg width="12" height="13" viewBox="0 0 12 13">
            <path d="M1 0v13" stroke="#fff" strokeWidth="1.500" />
            <path d="M2 1h5v2h5l-2 4H6V6H2z" fill="#fff" />
          </svg>
          <svg width="7" height="12" viewBox="0 0 7 12">
            <path d="M0 4h2l4-4v12L2 8H0z" fill="#f4f7fb" />
          </svg>
        </TrayIcons>
        <Clock>
          4:02 PM
          <br />
          12/5/2019
        </Clock>
        <ShowDesktop aria-label="Show desktop" />
      </Tray>
    </TaskBar>
  </Window>
);

export default App;
